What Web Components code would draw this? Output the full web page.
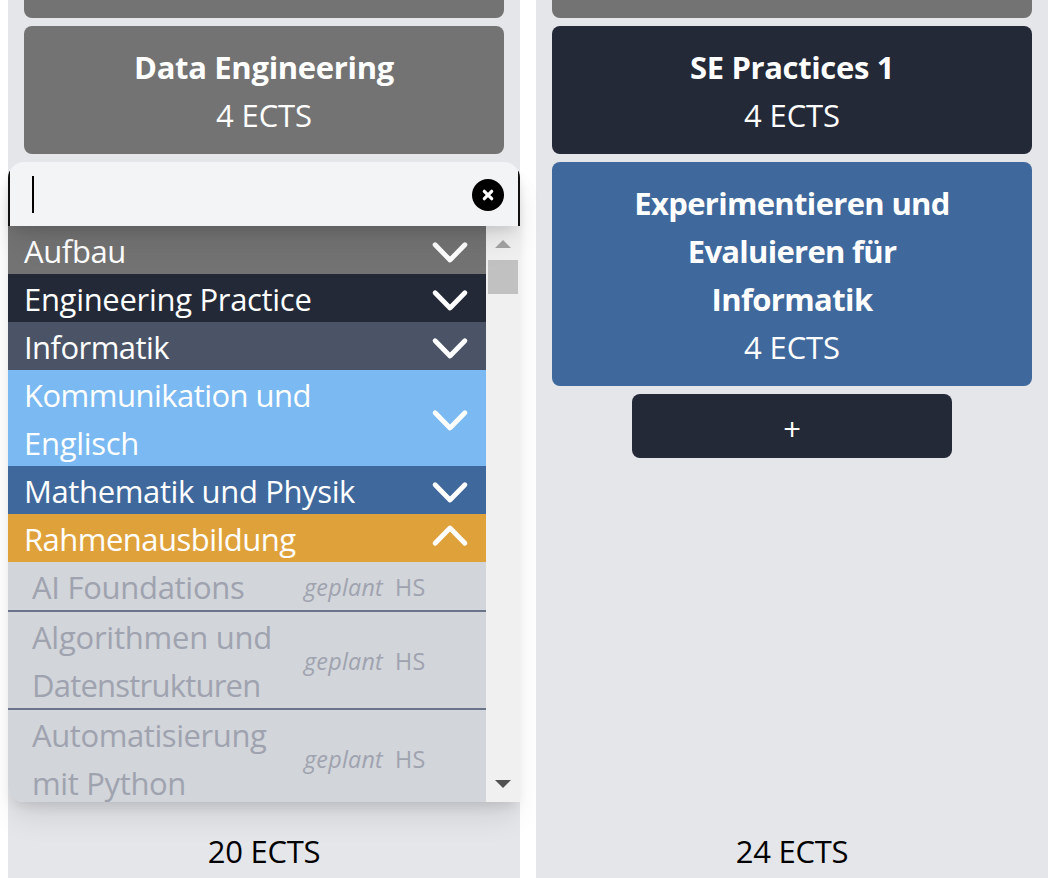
<!DOCTYPE html>
<html lang="de">
<head>
<meta charset="utf-8">
<title>Studienplanung</title>
<style>
html,body{margin:0;height:100%;overflow:hidden;background:#fff}
body{font:31px/48px "Open Sans","Noto Sans",sans-serif;color:#000}
</style>
</head>
<body>
<plan-board>
  <plan-column>
    <module-card class="cut" tone="#737373"></module-card>
    <module-card tone="#737373"><text-run slot="name" w="260">Data Engineering</text-run><text-run w="96">4 ECTS</text-run></module-card>
    <module-picker>
      <picker-group tone="#737373"><text-run w="102">Aufbau</text-run></picker-group>
      <picker-group tone="#232937"><text-run w="287.5">Engineering Practice</text-run></picker-group>
      <picker-group tone="#4b5467"><text-run w="145">Informatik</text-run></picker-group>
      <picker-group tone="#7ab9f2"><text-run w="287">Kommunikation und</text-run><br><text-run w="115">Englisch</text-run></picker-group>
      <picker-group tone="#3f689c"><text-run w="331">Mathematik und Physik</text-run></picker-group>
      <picker-group tone="#dfa23b" open><text-run w="271.5">Rahmenausbildung</text-run></picker-group>
      <picker-item><text-run w="212.5">AI Foundations</text-run></picker-item>
      <picker-item><text-run w="240">Algorithmen und</text-run><br><text-run w="228.5">Datenstrukturen</text-run></picker-item>
      <picker-item><text-run w="234.5">Automatisierung</text-run><br><text-run w="154">mit Python</text-run></picker-item>
    </module-picker>
    <text-run slot="total" w="112.5">20 ECTS</text-run>
  </plan-column>
  <plan-column>
    <module-card class="cut" tone="#737373"></module-card>
    <module-card tone="#232937"><text-run slot="name" w="204">SE Practices 1</text-run><text-run w="96">4 ECTS</text-run></module-card>
    <module-card tone="#3f689c"><text-run slot="name" w="315.5">Experimentieren und</text-run><text-run slot="name" w="208.5">Evaluieren für</text-run><text-run slot="name" w="161">Informatik</text-run><text-run w="96">4 ECTS</text-run></module-card>
    <add-button></add-button>
    <text-run slot="total" w="112.5">24 ECTS</text-run>
  </plan-column>
</plan-board>
<script>
class Base extends HTMLElement {
  constructor() {
    super();
    this.attachShadow({ mode: 'open' }).innerHTML = this.constructor.html;
  }
  connectedCallback() {
    const tone = this.getAttribute('tone');
    if (tone) this.style.setProperty('--tone', tone);
  }
}

/* A single line of text, tracked so that its advance equals the w attribute. */
class TextRun extends Base {
  static html = `<style>
    :host{display:inline-block;white-space:nowrap;vertical-align:top}
  </style><span><slot></slot></span>`;
  connectedCallback() {
    const w = +this.getAttribute('w');
    const n = this.textContent.length;
    const span = this.shadowRoot.querySelector('span');
    const natural = span.getBoundingClientRect().width;
    if (w && natural) span.style.letterSpacing = (w - natural) / n + 'px';
  }
}

class PlanBoard extends Base {
  static html = `<style>
    :host{display:grid;grid-template-columns:512px 512px;gap:16px;padding-left:8px;height:878px;overflow:hidden;box-sizing:border-box}
  </style><slot></slot>`;
}

class PlanColumn extends Base {
  static html = `<style>
    :host{display:flex;flex-direction:column;background:#e5e6ea;position:relative}
    .stack{display:flex;flex-direction:column;gap:8px;flex:1}
    footer{text-align:center;height:51px;position:relative;z-index:2}
  </style><div class="stack"><slot></slot></div><footer><slot name="total"></slot></footer>`;
}

class ModuleCard extends Base {
  static html = `<style>
    :host{display:flex;flex-direction:column;align-items:center;margin:0 16px;padding:17px 16px 15px;background:var(--tone);border-radius:8px;color:#fff}
    :host(.cut){height:18px;padding:0;border-radius:0 0 8px 8px}
    .name{display:flex;flex-direction:column;align-items:center;font-weight:700}
  </style><div class="name"><slot name="name"></slot></div><slot></slot>`;
}

class AddButton extends Base {
  static html = `<style>
    :host{display:block;margin:0 96px}
    button{display:block;width:320px;height:64px;padding:6px 0 0;border:0;border-radius:8px;background:#232937;color:#fff;font:inherit;text-align:center}
  </style><button>+</button>`;
}

class ModulePicker extends Base {
  static html = `<style>
    :host{display:block;height:640px;border-radius:16px 16px 0 16px;box-shadow:0 20px 30px -6px rgba(0,0,0,.1),0 8px 12px -4px rgba(0,0,0,.1)}
    header{position:relative;z-index:1;display:flex;align-items:center;justify-content:space-between;box-sizing:border-box;height:64px;padding:1px 16px 0 24px;background:linear-gradient(#111,#111) 0 9px/2px 55px no-repeat,linear-gradient(#111,#111) 100% 9px/2px 55px no-repeat,#f3f4f6;border-radius:16px 16px 0 0;box-shadow:0 20px 30px -6px rgba(0,0,0,.1),0 8px 12px -4px rgba(0,0,0,.1)}
    .caret{width:2px;height:37px;background:#000}
    svg{display:block}
    header svg{position:relative;top:.5px}
    .body{display:flex;height:576px}
    .list{width:478px;overflow:hidden;border-radius:0 0 0 16px;background:#d2d5da}
    .bar{flex:1;display:flex;flex-direction:column;justify-content:space-between;align-items:center;background:#f0f0f0;padding:14px 0}
    .thumb{width:30px;height:34px;background:#c1c1c1;margin:12px 0 auto}
  </style>
  <header><div class="caret"></div>
    <svg width="32" height="32" viewBox="0 0 32 32"><circle cx="16" cy="16" r="16"/><path d="M12.3 12.3l7.4 7.4M19.7 12.3l-7.4 7.4" stroke="#fff" stroke-width="3.2" stroke-linecap="round"/></svg>
  </header>
  <div class="body"><div class="list"><slot></slot></div>
    <div class="bar">
      <svg width="16" height="8"><path d="M0 8L8 0l8 8z" fill="#a3a3a3"/></svg>
      <div class="thumb"></div>
      <svg width="16" height="8"><path d="M0 0h16L8 8z" fill="#505050"/></svg>
    </div>
  </div>`;
}

class PickerGroup extends Base {
  static html = `<style>
    :host{display:flex;align-items:center;justify-content:space-between;padding:0 12px 0 16px;background:var(--tone);color:#fff}
    .label{position:relative;top:1px}
    svg{display:block}
    :host([open]) svg{transform:rotate(180deg)}
  </style><div class="label"><slot></slot></div>
  <svg width="48" height="48" viewBox="0 0 48 48" fill="none" stroke="#fff" stroke-width="4.8" stroke-linecap="round" stroke-linejoin="round"><path d="M9.1 18.8L24 34L38.9 18.8"/></svg>`;
}

class PickerItem extends Base {
  static html = `<style>
    :host{display:grid;grid-template-columns:272px 91px auto;align-items:center;padding-left:24px;border-bottom:2px solid #6b748b;color:#9fa3af}
    div,small{position:relative;top:1px}
    small{font-size:23.3px}
    i{font-style:italic}
  </style><div><slot></slot></div><small><i><text-run w="79">geplant</text-run></i></small><small><text-run w="30.5">HS</text-run></small>`;
}

customElements.define('plan-board', PlanBoard);
customElements.define('plan-column', PlanColumn);
customElements.define('module-card', ModuleCard);
customElements.define('add-button', AddButton);
customElements.define('module-picker', ModulePicker);
customElements.define('picker-group', PickerGroup);
customElements.define('picker-item', PickerItem);
customElements.define('text-run', TextRun);
</script>
</body>
</html>
